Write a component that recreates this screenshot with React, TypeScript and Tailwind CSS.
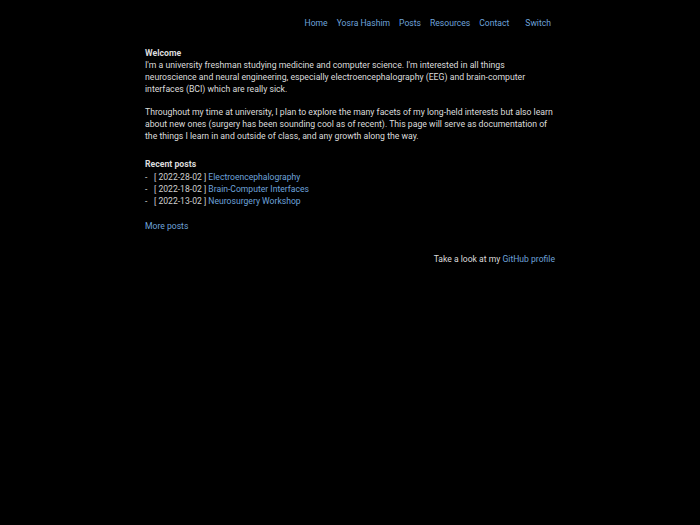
const posts = [
  { date: "2022-28-02", title: "Electroencephalography" },
  { date: "2022-18-02", title: "Brain-Computer Interfaces" },
  { date: "2022-13-02", title: "Neurosurgery Workshop" },
];

const navItems = ["Home", "Yosra Hashim", "Posts", "Resources", "Contact"];

export default function App() {
  return (
    <div className="min-h-[525px] w-full bg-black text-[#dcdcdc] text-[8.7px] leading-[12px] font-['Roboto',sans-serif]">
      <div className="mx-auto w-[410px]">
        <nav className="flex justify-end items-center gap-[9px] pt-[17px] h-[28px] text-[8.6px]">
          {navItems.map((n) => (
            <a key={n} className="text-[#6ea3db]">
              {n}
            </a>
          ))}
          <button className="text-[#6ea3db] px-[4px] ml-[3px]">Switch</button>
        </nav>

        <main className="pt-[19px]">
          <p className="font-bold">Welcome</p>
          <p>
            I'm a university freshman studying medicine and computer science. I'm interested in all things
            neuroscience and neural engineering, especially electroencephalography (EEG) and brain-computer
            interfaces (BCI) which are really sick.
          </p>
          <p className="mt-[11px]">
            Throughout my time at university, I plan to explore the many facets of my long-held interests but also learn
            about new ones (surgery has been sounding cool as of recent). This page will serve as documentation of
            the things I learn in and outside of class, and any growth along the way.
          </p>

          <p className="font-bold mt-[16px]">Recent posts</p>
          <ul className="mt-[1px] text-[8.6px] text-[#cfcfcf]">
            {posts.map((p) => (
              <li key={p.date} className="flex">
                <span className="w-[9px]">-</span>
                <span>
                  [ {p.date} ] <a className="text-[#6ea3db]">{p.title}</a>
                </span>
              </li>
            ))}
          </ul>

          <a className="block mt-[13px] text-[#6ea3db] text-[8.6px]">More posts</a>

          <p className="mt-[21px] text-right text-[8.6px]">
            Take a look at my <a className="text-[#6ea3db]">GitHub profile</a>
          </p>
        </main>
      </div>
    </div>
  );
}
